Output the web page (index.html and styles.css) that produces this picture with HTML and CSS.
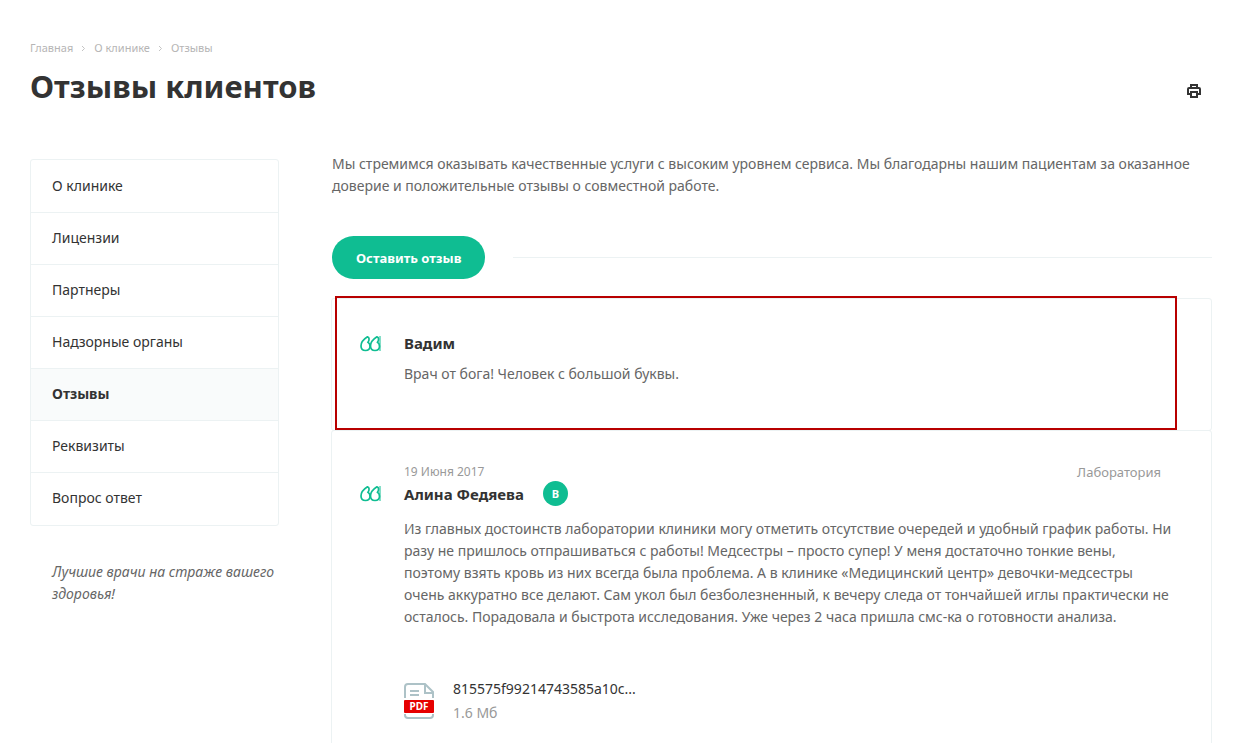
FILE: index.html
```html
<!doctype html>
<html lang="ru">
  <head>
    <meta charset="UTF-8" />
    <meta name="viewport" content="width=device-width, initial-scale=1.0" />
    <title>Отзывы клиентов</title>
    <link rel="stylesheet" href="styles.css">
  </head>
  <body>
    <header class="page-header">
      <nav class="breadcrumbs">
        <a href="#">Главная</a>
        <svg class="crumb-arrow" viewBox="0 0 5 7"><path d="M1 1l2.5 2.5L1 6" /></svg>
        <a href="#">О клинике</a>
        <svg class="crumb-arrow" viewBox="0 0 5 7"><path d="M1 1l2.5 2.5L1 6" /></svg>
        <span>Отзывы</span>
      </nav>
      <div class="title-row">
        <h1>Отзывы клиентов</h1>
        <button class="print-button" type="button" aria-label="Печать">
          <svg viewBox="0 0 14 14">
            <path d="M4 4V1h6v3M4 10H1V5q0-1 1-1h10q1 0 1 1v5h-3M4 8h6v5H4z" />
          </svg>
        </button>
      </div>
    </header>

    <div class="layout">
      <aside class="sidebar">
        <ul class="side-menu">
          <li><a href="#">О клинике</a></li>
          <li><a href="#">Лицензии</a></li>
          <li><a href="#">Партнеры</a></li>
          <li><a href="#">Надзорные органы</a></li>
          <li><a class="active" href="#">Отзывы</a></li>
          <li><a href="#">Реквизиты</a></li>
          <li><a href="#">Вопрос ответ</a></li>
        </ul>
        <p class="slogan">Лучшие врачи на страже вашего здоровья!</p>
      </aside>

      <main class="content">
        <p class="intro">
          Мы стремимся оказывать качественные услуги с высоким уровнем сервиса. Мы благодарны нашим пациентам за оказанное
          доверие и положительные отзывы о совместной работе.
        </p>
        <div class="add-review">
          <button class="add-button" type="button">Оставить отзыв</button>
        </div>

        <div class="reviews">
          <article class="review">
            <svg class="quote" viewBox="0 0 21 17"><use href="#quote" /></svg>
            <div class="review-body">
              <h2>Вадим</h2>
              <p>Врач от бога! Человек с большой буквы.</p>
            </div>
            <div class="highlight"></div>
          </article>

          <article class="review review-full">
            <svg class="quote" viewBox="0 0 21 17">
              <g id="quote">
                <path d="M7.500 1.800C4 4 1 8 1 11c0 2.700 1.800 4.500 4.500 4.500S10 13.700 10 11.300c0-1.900-.8-3.200-2-4C9.500 5 9.500 2.300 7.500 1.800z" />
                <path d="M17 1.800c-3.500 2.200-6.500 6.200-6.500 9.200 0 2.700 1.800 4.500 4.500 4.500s4.500-1.800 4.500-4.200c0-1.900-.8-3.200-2-4C19 5 19 2.300 17 1.800z" />
                <path class="quote-edge" d="M20 1v15" />
              </g>
            </svg>
            <div class="review-body">
              <div class="review-meta">
                <time datetime="2017-06-19">19 Июня 2017</time>
                <span class="department">Лаборатория</span>
              </div>
              <div class="author">
                <h2>Алина Федяева</h2>
                <a class="badge" href="#">В</a>
              </div>
              <p>
                Из главных достоинств лаборатории клиники могу отметить отсутствие очередей и удобный график работы. Ни
                разу не пришлось отпрашиваться с работы! Медсестры – просто супер! У меня достаточно тонкие вены,
                поэтому взять кровь из них всегда была проблема. А в клинике «Медицинский центр» девочки-медсестры
                очень аккуратно все делают. Сам укол был безболезненный, к вечеру следа от тончайшей иглы практически не
                осталось. Порадовала и быстрота исследования. Уже через 2 часа пришла смс-ка о готовности анализа.
              </p>
              <div class="file">
                <div class="file-icon">
                  <svg viewBox="0 0 30 36">
                    <path d="M1 15V4q0-3 3-3h17l8 8v6M21 1v9h8M6 8h9M6 12h9M1 31v1q0 3 3 3h22q3 0 3-3v-1" />
                  </svg>
                  <span>PDF</span>
                </div>
                <div>
                  <a href="#">815575f99214743585a10c...</a>
                  <small>1.6 Мб</small>
                </div>
              </div>
            </div>
          </article>
        </div>
      </main>
    </div>
  </body>
</html>
```

FILE: styles.css
```css
:root {
  --color-accent: #0fbd92;
  --color-dark: #333;
  --color-text: #666;
  --color-muted: #999;
  --color-border: #ecf2f3;
  --font-sans: "Noto Sans", "Open Sans", sans-serif;
}

* {
  box-sizing: border-box;
}

body {
  margin: 0;
  padding: 40px 44px 0 30px;
  font: 14px/22px var(--font-sans);
  color: var(--color-text);
  background: #fff;
}

h1,
h2,
p {
  margin: 0;
}

a {
  color: var(--color-dark);
  text-decoration: none;
}

button {
  border: none;
  font-family: inherit;
  cursor: pointer;
}

svg {
  fill: none;
  flex-shrink: 0;
}

.breadcrumbs {
  display: flex;
  align-items: center;
  gap: 8px;
  font-size: 11px;
  line-height: 16px;
  color: #b6b5b5;
}

.breadcrumbs a {
  color: inherit;
}

.crumb-arrow {
  width: 5px;
  height: 7px;
  stroke: #c4c4c4;
}

.title-row {
  display: flex;
  align-items: center;
  justify-content: space-between;
  padding: 8px 11px 0 0;
}

h1 {
  font-size: 31px;
  line-height: 44px;
  color: var(--color-dark);
}

.print-button {
  display: flex;
  padding: 10px 0 0;
  background: none;
}

.print-button svg {
  width: 14px;
  height: 14px;
  stroke: var(--color-dark);
  stroke-width: 2;
}

.layout {
  display: grid;
  grid-template-columns: 249px minmax(0, 1fr);
  column-gap: 53px;
  padding-top: 45px;
}

.sidebar {
  padding-top: 6px;
}

.side-menu {
  margin: 0;
  padding: 1px 0;
  list-style: none;
  border: 1px solid var(--color-border);
  border-radius: 3px;
}

.side-menu li + li {
  border-top: 1px solid var(--color-border);
}

.side-menu a {
  display: block;
  padding: 14px 21px 15px;
}

.side-menu .active {
  font-weight: bold;
  background: #f9fbfb;
}

.slogan {
  padding: 35px 0 0 22px;
  font-style: italic;
}

.add-review {
  display: flex;
  align-items: center;
  gap: 28px;
  padding: 39px 0 19px;
}

.add-review::after {
  content: "";
  flex: 1;
  height: 1px;
  background: var(--color-border);
}

.add-button {
  height: 43px;
  padding: 0 24px;
  border-radius: 22px;
  font-size: 13px;
  font-weight: bold;
  color: #fff;
  background: var(--color-accent);
}

.reviews {
  margin-left: -1px;
}

.review {
  position: relative;
  display: flex;
  gap: 23px;
  padding: 33px 39px 45px 28px;
  border: 1px solid var(--color-border);
  border-radius: 3px;
}

.review + .review {
  margin-top: -1px;
}

.review-full {
  padding-top: 30px;
}

.review-body {
  flex: 1;
  min-width: 0;
}

.quote {
  width: 21px;
  height: 17px;
  margin-top: 3px;
  stroke: var(--color-accent);
  stroke-width: 1.7;
}

.quote-edge {
  stroke-width: 1;
}

.review-full .quote {
  margin-top: 24px;
}

/* red frame around the new review */
.highlight {
  position: absolute;
  top: -3px;
  right: 34px;
  bottom: 0;
  left: 3px;
  border: 2px solid #b80000;
}

h2 {
  font-size: 15px;
  line-height: 22px;
  color: var(--color-dark);
}

.review h2 + p {
  padding-top: 9px;
}

.review-meta {
  display: flex;
  justify-content: space-between;
  margin-bottom: -2px;
  font-size: 12px;
  line-height: 22px;
  color: var(--color-muted);
}

.department {
  padding-right: 11px;
  font-size: 13px;
}

.author {
  display: flex;
  align-items: center;
  gap: 19px;
  padding-bottom: 12px;
}

.badge {
  width: 25px;
  border-radius: 50%;
  font-size: 11px;
  font-weight: bold;
  line-height: 25px;
  text-align: center;
  color: #fff;
  background: var(--color-accent);
}

.file {
  display: flex;
  align-items: center;
  gap: 19px;
  padding-top: 49px;
}

.file-icon {
  position: relative;
  width: 30px;
  height: 36px;
}

.file-icon svg {
  display: block;
  width: 100%;
  height: 100%;
  stroke: #adc2c7;
  stroke-width: 2;
}

.file-icon span {
  position: absolute;
  top: 17px;
  left: 0;
  width: 100%;
  border-radius: 1px;
  font-size: 10px;
  font-weight: bold;
  line-height: 13px;
  text-align: center;
  color: #fff;
  background: #e60000;
}

.file a,
.file small {
  display: block;
  font-size: 14px;
  line-height: 24px;
}

.file small {
  color: var(--color-muted);
}
```
